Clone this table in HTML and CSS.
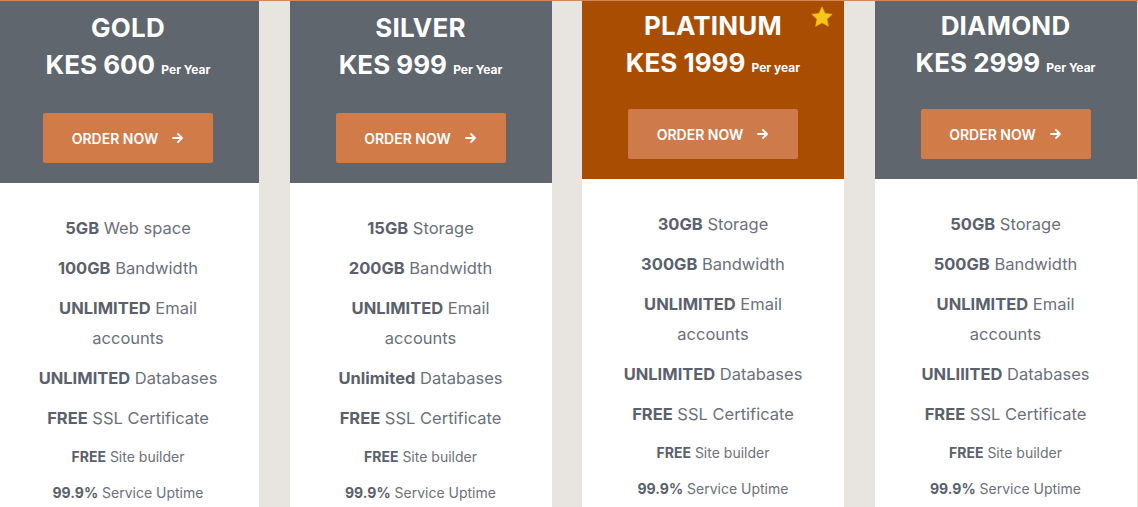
FILE: index.html
```html
<!DOCTYPE html>
<html>
<head>
<meta charset="utf-8">
<link rel="stylesheet" href="styles.css">
</head>
<body>
<div class="plans">
  <div class="card">
    <div class="head">
      <h2 class="name">GOLD</h2>
      <div class="price">KES 600 <span class="per">Per Year</span></div>
      <a class="btn">ORDER NOW <svg class="arrow" viewBox="0 0 12 12" width="12" height="12"><path d="M1 6h9M6 2l4 4-4 4" fill="none" stroke="#fff" stroke-width="1.8" stroke-linecap="round" stroke-linejoin="round"/></svg></a>
    </div>
    <ul class="feats">
      <li><b>5GB</b> Web space</li>
      <li><b>100GB</b> Bandwidth</li>
      <li><b>UNLIMITED</b> Email accounts</li>
      <li><b>UNLIMITED</b> Databases</li>
      <li><b>FREE</b> SSL Certificate</li>
      <li class="sm"><b>FREE</b> Site builder</li>
      <li class="sm"><b>99.9%</b> Service Uptime</li>
    </ul>
  </div>
  <div class="card">
    <div class="head">
      <h2 class="name">SILVER</h2>
      <div class="price">KES 999 <span class="per">Per Year</span></div>
      <a class="btn">ORDER NOW <svg class="arrow" viewBox="0 0 12 12" width="12" height="12"><path d="M1 6h9M6 2l4 4-4 4" fill="none" stroke="#fff" stroke-width="1.8" stroke-linecap="round" stroke-linejoin="round"/></svg></a>
    </div>
    <ul class="feats">
      <li><b>15GB</b> Storage</li>
      <li><b>200GB</b> Bandwidth</li>
      <li><b>UNLIMITED</b> Email accounts</li>
      <li><b>Unlimited</b> Databases</li>
      <li><b>FREE</b> SSL Certificate</li>
      <li class="sm"><b>FREE</b> Site builder</li>
      <li class="sm"><b>99.9%</b> Service Uptime</li>
    </ul>
  </div>
  <div class="card up featured">
    <div class="head">
      <svg class="star" viewBox="0 0 24 24" width="24" height="24"><path d="M12 1.8l3.1 6.6 7.1.9-5.2 4.9 1.4 7.1L12 17.8l-6.4 3.5L7 14.2 1.8 9.3l7.1-.9z" fill="#f6c619" stroke="#f2b705" stroke-width=".6" stroke-linejoin="round"/></svg>
      <h2 class="name">PLATINUM</h2>
      <div class="price">KES 1999 <span class="per">Per year</span></div>
      <a class="btn">ORDER NOW <svg class="arrow" viewBox="0 0 12 12" width="12" height="12"><path d="M1 6h9M6 2l4 4-4 4" fill="none" stroke="#fff" stroke-width="1.8" stroke-linecap="round" stroke-linejoin="round"/></svg></a>
    </div>
    <ul class="feats">
      <li><b>30GB</b> Storage</li>
      <li><b>300GB</b> Bandwidth</li>
      <li><b>UNLIMITED</b> Email accounts</li>
      <li><b>UNLIMITED</b> Databases</li>
      <li><b>FREE</b> SSL Certificate</li>
      <li class="sm"><b>FREE</b> Site builder</li>
      <li class="sm"><b>99.9%</b> Service Uptime</li>
    </ul>
  </div>
  <div class="card up">
    <div class="head">
      <h2 class="name">DIAMOND</h2>
      <div class="price">KES 2999 <span class="per">Per Year</span></div>
      <a class="btn">ORDER NOW <svg class="arrow" viewBox="0 0 12 12" width="12" height="12"><path d="M1 6h9M6 2l4 4-4 4" fill="none" stroke="#fff" stroke-width="1.8" stroke-linecap="round" stroke-linejoin="round"/></svg></a>
    </div>
    <ul class="feats">
      <li><b>50GB</b> Storage</li>
      <li><b>500GB</b> Bandwidth</li>
      <li><b>UNLIMITED</b> Email accounts</li>
      <li><b>UNLIIITED</b> Databases</li>
      <li><b>FREE</b> SSL Certificate</li>
      <li class="sm"><b>FREE</b> Site builder</li>
      <li class="sm"><b>99.9%</b> Service Uptime</li>
    </ul>
  </div>
</div>
</body>
</html>
```
FILE: styles.css
```css
html, body {
  margin: 0;
  padding: 0;
}
body {
  background: #e8e4df;
  border-top: 1px solid #d48757;
  font-family: "Inter", "Open Sans", sans-serif;
  height: 506px;
  overflow: hidden;
}
.plans {
  display: flex;
  gap: 30.5px;
  margin-left: -3px;
  height: 100%;
}
.card {
  width: 262px;
  flex: none;
  background: #fff;
  display: flex;
  flex-direction: column;
  overflow: hidden;
}
.head {
  position: relative;
  flex: none;
  background: #5f666d;
  height: 182px;
  box-sizing: border-box;
  padding-top: 10px;
  display: flex;
  flex-direction: column;
  align-items: center;
  color: #fff;
}
.up .head {
  height: 178px;
  padding-top: 8px;
}
.featured .head {
  background: #a94d03;
}
.name {
  margin: 0;
  font-size: 26px;
  line-height: 34px;
  font-weight: 700;
  letter-spacing: 0.2px;
}
.price {
  font-size: 26px;
  line-height: 40px;
  font-weight: 700;
}
.per {
  font-size: 12px;
  font-weight: 700;
}
.btn {
  margin-top: 23px;
  width: 170px;
  height: 50px;
  background: #d07b48;
  border-radius: 2px;
  display: flex;
  align-items: center;
  justify-content: center;
  gap: 14px;
  font-size: 14px;
  font-weight: 600;
  color: #fff;
}
.up .btn {
  margin-top: 21px;
}
.featured .btn {
  background: #cf7a4b;
}
.arrow {
  display: block;
}
.star {
  position: absolute;
  top: 4px;
  right: 10px;
}
.feats {
  flex: none;
  list-style: none;
  margin: 0;
  padding: 30px 36px 0;
  text-align: center;
  color: #6b717b;
  font-size: 16.5px;
  line-height: 30px;
}
.feats li {
  margin-bottom: 10px;
}
.feats b {
  color: #5b616c;
  font-weight: 700;
}
.feats li.sm {
  font-size: 14px;
  line-height: 27px;
  margin-bottom: 9px;
}
```
